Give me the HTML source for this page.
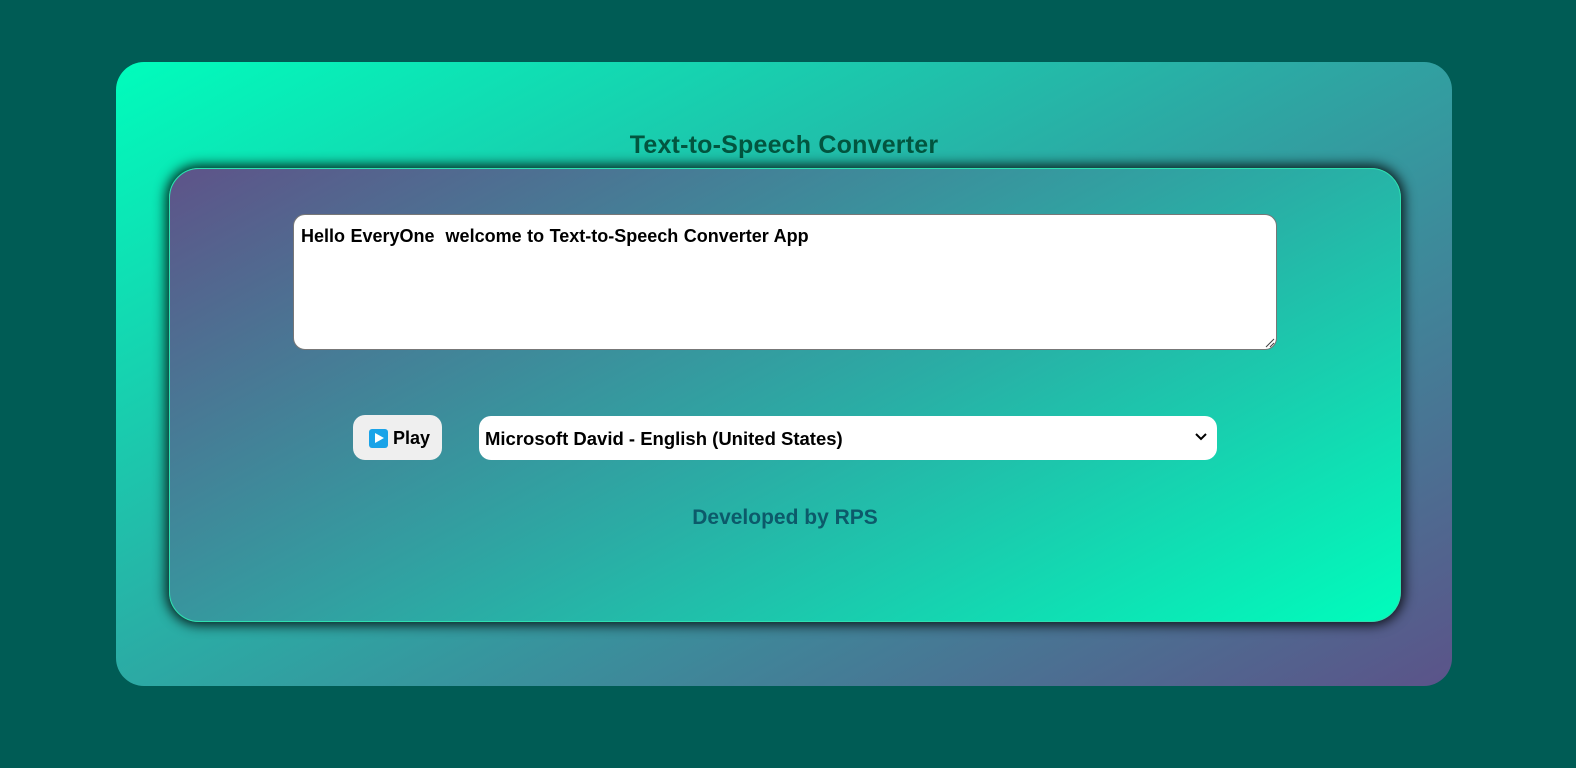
<!DOCTYPE html>
<html><head><style>
html,body{margin:0;width:1576px;height:768px;background:#005c55;overflow:hidden;font-family:"Liberation Sans",Arial,sans-serif;font-weight:bold}
.outer{position:absolute;left:116px;top:62px;width:1336px;height:624px;border-radius:28px;background:linear-gradient(152deg,#00fdbc 0%,#2aada5 45%,#5b5389 100%)}
.title{position:absolute;left:0;width:100%;top:69px;text-align:center;font-size:25px;color:#02553f;letter-spacing:0.2px}
.inner{position:absolute;left:53px;top:106px;width:1230px;height:452px;border-radius:30px;border:1px solid #2ee0b0;background:linear-gradient(152deg,#5e5389 0%,#2aada5 55%,#00fdbc 100%);box-shadow:0 0 12px 3px rgba(0,0,0,.85)}
.ta{position:absolute;left:123px;top:45px;width:982px;height:134px;background:#fff;border:1px solid #777;border-radius:12px;box-sizing:content-box}
.ta span{position:absolute;left:7px;top:11px;font-size:18px;color:#000;letter-spacing:0;word-spacing:0.5px}
.play{position:absolute;left:183px;top:246px;width:89px;height:45px;border-radius:12px;background:#efefef;font-size:18px;color:#000}
.ic{position:absolute;left:16px;top:14px;width:19px;height:19px;background:#1aa3e8;border-radius:3px}
.ic:after{content:"";position:absolute;left:6px;top:4px;border-left:9px solid #fff;border-top:5.5px solid transparent;border-bottom:5.5px solid transparent}
.play span{position:absolute;left:40px;top:13px}
.sel{position:absolute;left:309px;top:247px;width:738px;height:44px;border-radius:12px;background:#fff;font-size:18.5px;color:#000}
.sel span{position:absolute;left:6px;top:12px}
.sel svg{position:absolute;right:10px;top:17px}
.foot{position:absolute;left:0;width:100%;top:337px;text-align:center;font-size:21px;color:#0c5a6a}
</style></head><body>
<div class="outer">
<div class="title">Text-to-Speech Converter</div>
<div class="inner">
<div class="ta"><span>Hello EveryOne&nbsp; welcome to Text-to-Speech Converter App</span>
<svg width="12" height="12" style="position:absolute;right:1px;bottom:1px"><path d="M11 3L3 11M11 7L7 11" stroke="#444" stroke-width="1"/></svg></div>
<div class="play"><div class="ic"></div><span>Play</span></div>
<div class="sel"><span>Microsoft David - English (United States)</span>
<svg width="12" height="8"><path d="M1 1L6 6L11 1" stroke="#000" stroke-width="2" fill="none"/></svg></div>
<div class="foot">Developed by RPS</div>
</div>
</div>
</body></html>
